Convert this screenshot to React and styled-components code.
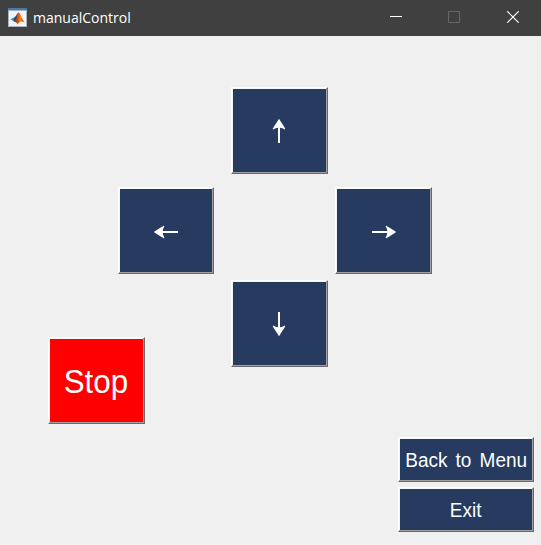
import React from "react";
import styled, { createGlobalStyle } from "styled-components";

const GlobalStyle = createGlobalStyle`
  * { box-sizing: border-box; }
  body { margin: 0; background: #f0f0f0; overflow: hidden; }
`;

const Window = styled.div`
  display: flex;
  flex-direction: column;
  width: 541px;
  height: 545px;
  background: #f0f0f0;
`;

const TitleBar = styled.header`
  display: flex;
  align-items: center;
  height: 36px;
  flex: none;
  padding-left: 8px;
  background: #404040;
  color: #fff;
`;

const AppIcon = styled.svg`
  display: block;
  width: 19px;
  height: 19px;
  flex: none;
  margin: 0 6px 2px 0;
`;

const Title = styled.span`
  flex: 1;
  padding-bottom: 1px;
  font: 14px/20px "Open Sans", "Noto Sans", sans-serif;
  white-space: nowrap;
`;

const WindowControls = styled.div`
  display: flex;
  height: 36px;
`;

const ControlButton = styled.button`
  display: flex;
  align-items: center;
  justify-content: center;
  width: ${(p) => p.$width}px;
  height: 34px;
  padding: 0;
  border: 0;
  background: transparent;
  color: ${(p) => (p.disabled ? "#666" : "#fff")};
  svg { display: block; }
`;

const Content = styled.main`
  display: flex;
  flex-direction: column;
  flex: 1;
  padding-top: 51px;
`;

const DirectionPad = styled.div`
  display: grid;
  grid-template-columns: 96px 17px 97px 7px 97px;
  grid-template-rows: 87px 13px 87px 6px 87px;
  grid-template-areas:
    ". . up . ."
    ". . . . ."
    "left . . . right"
    ". . . . ."
    ". . down . .";
  width: max-content;
  margin-left: 118px;
`;

const PushButton = styled.button`
  display: flex;
  align-items: center;
  justify-content: center;
  width: ${(p) => p.$width || 97}px;
  height: ${(p) => p.$height || 87}px;
  padding: 0;
  border: 1px solid;
  border-color: #fff #696969 #696969 #fff;
  box-shadow: inset -1px -1px #a0a0a0, inset 1px 1px #f6f6f6;
  background: ${(p) => p.$fill || "#273b60"};
  color: #fff;
  font: ${(p) => p.$size || 20}px "Liberation Sans", Arial, sans-serif;
  white-space: nowrap;
  svg { display: block; }
`;

const DirectionButton = styled(PushButton)`
  grid-area: ${(p) => p.$area};
  align-items: flex-start;
  justify-content: flex-start;
`;

const StopButton = styled(PushButton)`
  padding: 2px 2px 0 0;
`;

const StopRow = styled.div`
  margin-top: -30px;
  padding-left: 48px;
`;

const Footer = styled.footer`
  display: flex;
  flex-direction: column;
  align-items: flex-end;
  gap: 5px;
  margin-top: 13px;
  padding-right: 7px;
`;

const Label = styled.span`
  display: block;
  line-height: 1;
  word-spacing: 3px;
  transform: scaleX(0.95);
`;

const arrows = {
  up: "translate(47 43)",
  down: "translate(47 43) rotate(180)",
  left: "translate(47 44) rotate(270)",
  right: "translate(48 44) rotate(90)",
};

function Arrow({ direction }) {
  return (
    <svg width="94" height="85">
      <path
        transform={arrows[direction]}
        fill="#fff"
        d="M0-12.2 1.7-9.6 4.5-5.2 6.3-2.3 5.7-1.6Q3.5-3 1-3.3V12H-1V-3.3Q-3.5-3-5.7-1.6L-6.3-2.3-4.5-5.2-1.7-9.6Z"
      />
    </svg>
  );
}

const directions = [
  { area: "up", label: "Up" },
  { area: "left", label: "Left", width: 96 },
  { area: "right", label: "Right" },
  { area: "down", label: "Down" },
];

export default function App() {
  return (
    <>
      <GlobalStyle />
      <Window>
        <TitleBar>
          <AppIcon viewBox="0 0 19 19">
            <defs>
              <linearGradient id="flame" x1="0" x2="1">
                <stop offset="0" stopColor="#6b2414" />
                <stop offset=".4" stopColor="#d85a16" />
                <stop offset=".6" stopColor="#f58a20" />
                <stop offset="1" stopColor="#a52a12" />
              </linearGradient>
            </defs>
            <path d="M0 0H19V19H0Z" fill="#a7b4bf" />
            <path d="M1 3H18V18H1Z" fill="#f3f4f6" />
            <path d="M0 0H19V2H0Z" fill="#4879a5" />
            <path d="M2.5 11.3 6 9.5 8 11 6.2 13.8Z" fill="#3d87b8" />
            <path d="M6 9.5C8 9 9 5.5 10.5 4.3L8.7 11.5 6.2 13.8Z" fill="#264d72" />
            <path d="M10.5 4.3C12.8 5.5 13.8 11 16.8 14.7 14.2 12.8 12 13.4 9.5 16.5 8.8 14.5 7.8 13.6 6.2 13.8 8.8 11.5 9 7 10.5 4.3Z" fill="url(#flame)" />
          </AppIcon>
          <Title>manualControl</Title>
          <WindowControls>
            <ControlButton $width={58} aria-label="Minimize">
              <svg width="12" height="12"><path d="M0 5.5H12" stroke="currentColor" /></svg>
            </ControlButton>
            <ControlButton $width={58} disabled aria-label="Maximize">
              <svg width="12" height="12"><path d="M.5.5H11.5V11.5H.5Z" fill="none" stroke="currentColor" /></svg>
            </ControlButton>
            <ControlButton $width={58} aria-label="Close">
              <svg width="14" height="12"><path d="M2.3.3 13.7 11.7M13.7.3 2.3 11.7" stroke="currentColor" strokeWidth="1.2" /></svg>
            </ControlButton>
          </WindowControls>
        </TitleBar>
        <Content>
          <DirectionPad>
            {directions.map(({ area, label, width }) => (
              <DirectionButton key={area} $area={area} $width={width} aria-label={label}>
                <Arrow direction={area} />
              </DirectionButton>
            ))}
          </DirectionPad>
          <StopRow>
            <StopButton $fill="#ff0000" $size={33}>
              <Label>Stop</Label>
            </StopButton>
          </StopRow>
          <Footer>
            <PushButton $width={136} $height={45}><Label>Back to Menu</Label></PushButton>
            <PushButton $width={136} $height={45}><Label>Exit</Label></PushButton>
          </Footer>
        </Content>
      </Window>
    </>
  );
}
